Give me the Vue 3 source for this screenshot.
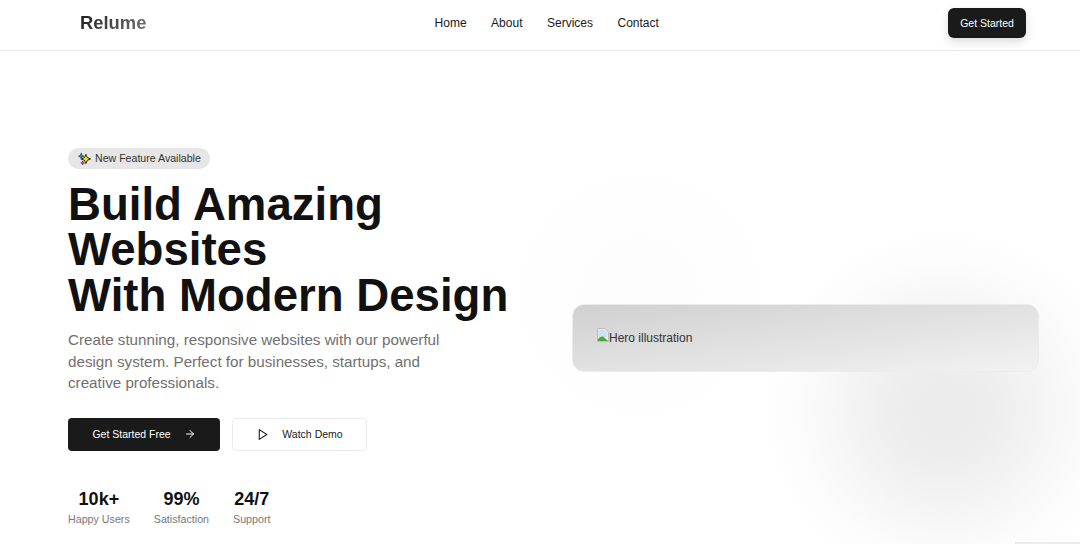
<template>
  <div class="page">
    <div class="blob blob-faint"></div>
    <div class="blob blob-main"></div>
    <div class="corner-strip"></div>

    <header class="navbar">
      <div class="logo">Relume</div>
      <nav class="nav-links">
        <a v-for="link in links" :key="link">{{ link }}</a>
      </nav>
      <button class="nav-btn">Get Started</button>
    </header>

    <main class="hero">
      <section class="hero-left">
        <div class="badge">
          <svg class="sparkle" viewBox="0 0 14 14" width="13" height="13">
            <path d="M8.5 2.5 10 6l3.5 1.5L10 9l-1.5 3.5L7 9 3.5 7.5 7 6z" fill="#f7e017" stroke="#1a1a1a" stroke-width="1" />
            <path d="M3.5 1 4.5 3.5 6.5 4.5 4.5 5.5 3.5 8 2.500 5.500 .5 4.500 2.500 3.500z" fill="#1d8a9e" stroke="#16323a" stroke-width=".6" />
            <path d="M5 9.500 5.800 11 7 11.800 5.800 12.600 5 14 4.200 12.600 3 11.800 4.200 11z" fill="#b04a8c" stroke="#3a1a30" stroke-width=".5" />
          </svg>
          <span>New Feature Available</span>
        </div>

        <h1>Build Amazing Websites<br />With Modern Design</h1>

        <p class="lead">
          Create stunning, responsive websites with our powerful design system. Perfect for businesses, startups, and creative professionals.
        </p>

        <div class="actions">
          <button class="btn btn-dark">
            Get Started Free
            <svg viewBox="0 0 24 24" width="12" height="12" fill="none" stroke="currentColor" stroke-width="2" stroke-linecap="round" stroke-linejoin="round">
              <path d="M5 12h14" />
              <path d="m12 5 7 7-7 7" />
            </svg>
          </button>
          <button class="btn btn-light">
            <svg viewBox="0 0 24 24" width="13" height="13" fill="none" stroke="currentColor" stroke-width="2" stroke-linecap="round" stroke-linejoin="round">
              <path d="M6 3l14 9-14 9z" />
            </svg>
            Watch Demo
          </button>
        </div>

        <div class="stats">
          <div v-for="stat in stats" :key="stat.label" class="stat">
            <strong>{{ stat.value }}</strong>
            <span>{{ stat.label }}</span>
          </div>
        </div>
      </section>

      <section class="hero-right">
        <div class="panel">
          <svg class="broken" viewBox="0 0 13 15" width="12" height="14">
            <path d="M.5.5h8l4 4v10H.500z" fill="#f4f4f4" stroke="#b8b8b8" />
            <path d="M1.500 1.500h6.500l3.500 3.500v5H1.500z" fill="#cfe0f8" />
            <path d="M1 14v-2c2-2.500 4-3.500 6-2.500l5 4.500v0z" fill="#4fa63a" />
          </svg>
          <span>Hero illustration</span>
        </div>
      </section>
    </main>
  </div>
</template>

<script setup>
const links = ["Home", "About", "Services", "Contact"];

const stats = [
  { value: "10k+", label: "Happy Users" },
  { value: "99%", label: "Satisfaction" },
  { value: "24/7", label: "Support" },
];
</script>

<style>
html,
body {
  margin: 0;
  background: #fff;
}
</style>

<style scoped>
.page {
  position: relative;
  width: 1080px;
  height: 544px;
  overflow: hidden;
  background: #fff;
  font-family: "Liberation Sans", Arial, sans-serif;
  color: #1a1a1a;
}

.blob {
  position: absolute;
  border-radius: 50%;
}

.blob-faint {
  left: 490px;
  top: 145px;
  width: 300px;
  height: 300px;
  background: radial-gradient(circle closest-side, #fdfdfd 0%, #fefefe 70%, rgba(255, 255, 255, 0) 100%);
}

.blob-main {
  left: 760px;
  top: 225px;
  width: 370px;
  height: 370px;
  background: radial-gradient(circle closest-side, #ebebeb 0%, #ededed 25%, #f5f5f5 55%, #fcfcfc 80%, rgba(255, 255, 255, 0) 100%);
}

.corner-strip {
  position: absolute;
  left: 1015px;
  right: 0;
  top: 542px;
  height: 2px;
  background: #ececec;
}

.navbar {
  position: relative;
  display: flex;
  align-items: center;
  justify-content: space-between;
  padding: 8px 54px 12px 80px;
  background: #fff;
  border-bottom: 1px solid #ececec;
}

.logo {
  font-size: 18.4px;
  font-weight: 700;
  background: linear-gradient(135deg, #1a1a1a, #777);
  -webkit-background-clip: text;
  background-clip: text;
  color: transparent;
}

.nav-links {
  display: flex;
  gap: 24.5px;
  margin-left: -1px;
  font-size: 12px;
  color: #1a1a1a;
}

.nav-btn {
  width: 78px;
  height: 30px;
  padding: 0;
  border: none;
  border-radius: 6px;
  background: #1a1a1a;
  color: #fff;
  font-family: inherit;
  font-size: 10.5px;
  box-shadow: 0 4px 10px rgba(0, 0, 0, 0.14);
}

.hero {
  position: relative;
  display: grid;
  grid-template-columns: 467px 467px;
  gap: 37px;
  padding: 97px 41px 0 68px;
}

.badge {
  display: inline-flex;
  align-items: center;
  gap: 4px;
  box-sizing: border-box;
  height: 21px;
  padding: 0 9px 1px 10px;
  border-radius: 11px;
  background: #e6e6e6;
  font-size: 10.6px;
  color: #333;
}

h1 {
  margin: 12.500px 0 0;
  font-size: 45.6px;
  line-height: 45.6px;
  font-weight: 700;
  color: #111;
}

.lead {
  width: 380px;
  margin: 11px 0 0;
  font-size: 15.2px;
  line-height: 21.5px;
  color: #707070;
}

.actions {
  display: flex;
  gap: 12px;
  margin-top: 24px;
}

.btn {
  display: flex;
  align-items: center;
  justify-content: center;
  height: 33px;
  padding: 0;
  border-radius: 4px;
  font-family: inherit;
  font-size: 10.5px;
}

.btn-dark {
  width: 152px;
  gap: 13px;
  border: none;
  background: #1a1a1a;
  color: #fff;
}

.btn-light {
  width: 135px;
  gap: 13px;
  border: 1px solid #ececec;
  background: #fff;
  color: #1a1a1a;
}

.stats {
  display: flex;
  gap: 24px;
  margin-top: 38px;
}

.stat {
  display: flex;
  flex-direction: column;
  align-items: center;
}

.stat strong {
  font-size: 18px;
  line-height: 21px;
  color: #111;
}

.stat span {
  margin-top: 3px;
  font-size: 10.7px;
  color: #777;
}

.hero-right {
  display: flex;
  align-items: center;
  padding-top: 3px;
}

.panel {
  display: flex;
  align-items: center;
  box-sizing: border-box;
  width: 467px;
  height: 68px;
  padding: 0 24px;
  border: 1px solid #ececec;
  border-radius: 12px;
  background: linear-gradient(172deg, #d0d0d0, #f2f2f2);
  font-size: 12px;
  color: #333;
}

.broken {
  margin-top: -6px;
}
</style>
